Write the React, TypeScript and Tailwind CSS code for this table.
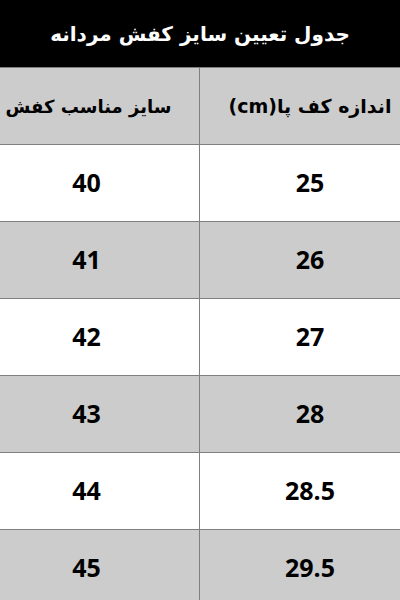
import React from "react";

const rows = [
  { size: "40", foot: "25" },
  { size: "41", foot: "26" },
  { size: "42", foot: "27" },
  { size: "43", foot: "28" },
  { size: "44", foot: "28.5" },
  { size: "45", foot: "29.5" },
];

export default function App() {
  return (
    <div className="w-[400px] h-[600px] overflow-hidden bg-white">
      <div
        dir="rtl"
        className="h-[67px] bg-black text-white flex items-center justify-center text-[20px] font-bold font-['DejaVu_Sans',sans-serif] whitespace-nowrap"
      >
        جدول تعیین سایز کفش مردانه
      </div>

      <div className="grid grid-cols-2 h-[78px] bg-[#cccccc] border-t border-b border-[#7f7f7f] font-bold text-black font-['DejaVu_Sans',sans-serif]">
        <div
          dir="rtl"
          className="flex items-center justify-center pr-[22px] text-[18px] whitespace-nowrap border-r border-[#7f7f7f]"
        >
          سایز مناسب کفش
        </div>
        <div
          dir="rtl"
          className="flex items-center justify-center pl-[20px] text-[19px] whitespace-nowrap"
        >
          اندازه کف پا(cm)
        </div>
      </div>

      {rows.map((r, i) => (
        <div
          key={r.size}
          className={
            i % 2 === 0
              ? "grid grid-cols-2 h-[77px] border-b border-[#7f7f7f] bg-white text-[25px] font-bold text-black font-['Open_Sans',sans-serif]"
              : "grid grid-cols-2 h-[77px] border-b border-[#7f7f7f] bg-[#cccccc] text-[25px] font-bold text-black font-['Open_Sans',sans-serif]"
          }
        >
          <div className="flex items-center justify-center pr-[26px] border-r border-[#7f7f7f]">
            {r.size}
          </div>
          <div className="flex items-center justify-center pl-[20px]">{r.foot}</div>
        </div>
      ))}
    </div>
  );
}
